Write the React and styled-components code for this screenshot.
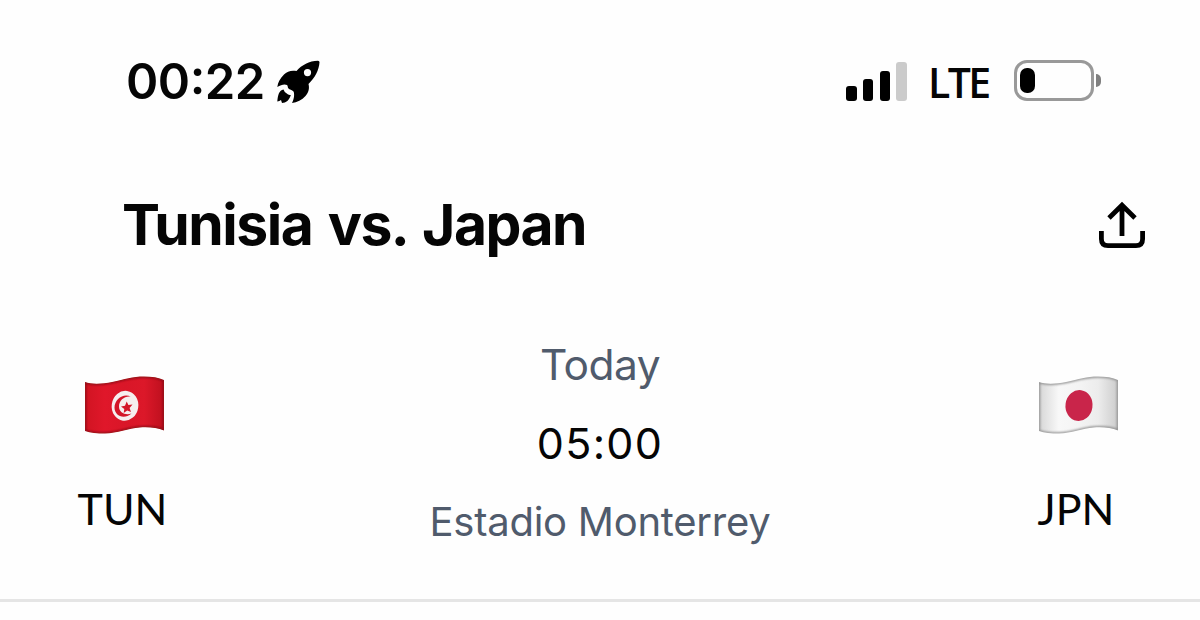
import React from "react";
import styled, { createGlobalStyle } from "styled-components";

const GlobalStyle = createGlobalStyle`
  body {
    margin: 0;
    background-color: #fefefe;
    font-family: "Inter", sans-serif;
    color: #050505;
  }
`;

const Page = styled.div`
  width: 1200px;
  height: 620px;
  box-sizing: border-box;
  padding-top: 52px;
  display: flex;
  flex-direction: column;
  overflow: hidden;
`;

const StatusBar = styled.div`
  height: 60px;
  padding: 0 99px 0 126px;
  display: flex;
  flex-direction: row;
  align-items: center;
  justify-content: space-between;
`;

const StatusGroup = styled.div`
  display: flex;
  flex-direction: row;
  align-items: center;
`;

const Clock = styled.div`
  width: 150px;
  font-weight: 600;
  font-size: 49px;
  line-height: 60px;
  white-space: nowrap;
  letter-spacing: -0.5px;
  font-feature-settings: "case";
`;

const Signal = styled.div`
  width: 61px;
  height: 39px;
  margin-bottom: 2px;
  display: flex;
  flex-direction: row;
  align-items: flex-end;
  justify-content: space-between;
`;

const SignalBar = styled.div`
  width: 10.5px;
  height: ${(props) => props.$height}px;
  border-radius: 3px;
  background-color: ${(props) => (props.$active ? "#000000" : "#cbcbcb")};
`;

const Network = styled.div`
  width: 107px;
  padding-left: 21px;
  box-sizing: border-box;
  font-family: "Open Sans", sans-serif;
  font-weight: 600;
  font-size: 41px;
  line-height: 60px;
  white-space: nowrap;
  letter-spacing: -2.6px;
`;

const Battery = styled.div`
  width: 80px;
  height: 41px;
  margin-bottom: 3px;
  box-sizing: border-box;
  border: 3px solid #999999;
  border-radius: 13px;
  padding: 5px 3px;
`;

const BatteryLevel = styled.div`
  width: 15px;
  height: 25px;
  border-radius: 7px;
  background-color: #000000;
`;

const BatteryTip = styled.div`
  width: 5px;
  height: 13px;
  margin-left: 2px;
  margin-bottom: 3px;
  border-radius: 0 5px 5px 0;
  background-color: #808080;
`;

const Header = styled.div`
  height: 60px;
  margin-top: 83px;
  padding: 0 54px 0 122px;
  display: flex;
  flex-direction: row;
  align-items: center;
  justify-content: space-between;
`;

const Title = styled.h1`
  margin: 0;
  font-weight: 700;
  font-size: 57px;
  line-height: 60px;
  white-space: nowrap;
  letter-spacing: -1.5px;
  word-spacing: 3.5px;
`;

const Match = styled.div`
  height: 276px;
  margin-top: 71px;
  box-sizing: border-box;
  border-bottom: 3px solid #e5e5e5;
  display: flex;
  flex-direction: row;
  justify-content: space-between;
`;

const Team = styled.div`
  width: ${(props) => props.$width}px;
  padding-top: 44px;
  display: flex;
  flex-direction: column;
  align-items: center;
`;

const TeamCode = styled.div`
  margin-top: 43px;
  margin-right: ${(props) => props.$shift || 0}px;
  font-family: "Lato", sans-serif;
  font-size: 43px;
  line-height: 52px;
`;

const Details = styled.div`
  flex: 1;
  padding-right: 8px;
  display: flex;
  flex-direction: column;
  align-items: center;
`;

const DetailText = styled.div`
  font-size: ${(props) => props.$size}px;
  line-height: 78px;
  letter-spacing: ${(props) => props.$spacing || 0}px;
  color: ${(props) => (props.$muted ? "#505b6c" : "#050505")};
  white-space: nowrap;
`;

const Venue = styled(DetailText)`
  line-height: 80px;
`;

const signalBars = [
  { height: 15, active: true },
  { height: 22, active: true },
  { height: 30, active: true },
  { height: 39, active: false },
];

const flagShape =
  "M5 12 C12 14.5 22 14 32 12 C45 9 52 6.5 64 6.5 C72 6.5 79 7.5 84 10 V60.5 C77 57.5 68 57 60 57.5 C48 58.5 38 63 25 63.5 C17 63.5 10 63 5 61 Z";

const starShape =
  "M41 36.5 L45 35.8 L46.7 31.5 L48.4 35 L52.5 34.5 L49.6 38 L51 42 L47.2 40.5 L43.7 43 L44.3 38.9 Z";

const RocketIcon = () => (
  <svg width="44" height="44" viewBox="0 0 44 44">
    <path
      fillRule="evenodd"
      d="M42 0.8 C33 1 26 5 20.5 11 C16 10 11 11 8 14.5 C4 18.5 2 22 1.3 27 C5 24.5 9 23.7 11 25 C12 26 11.5 27.5 12.5 28.5 C13.5 30 16 29.5 17.5 31.5 C18.5 33.5 18.5 38 16 43 C21 42.5 26 40 29.5 36 C33 32 33.5 28 32.5 24 C39 18 43 10 43.5 2.3 Q43.5 0.8 42 0.8 Z M31.5 9 A3.6 3.6 0 1 1 31.5 16.2 A3.6 3.6 0 1 1 31.5 9 Z"
    />
    <path d="M7.5 29.5 C3 30.5 2 34.5 1.3 41.5 Q3.5 41.3 5 40 L6 43 C10 43 13.5 40 14.8 35 Q12 35.4 10.8 33.6 Q8.4 32.4 7.5 29.5 Z" />
  </svg>
);

const ShareIcon = () => (
  <svg width="48" height="48" viewBox="0 0 48 48" fill="none" stroke="#000" strokeWidth="4.8">
    <path d="M24 35 V4.5 M11 17 L24 4.2 L37 17" />
    <path d="M3.4 30 V38 Q3.4 44.6 10 44.6 H38 Q44.6 44.6 44.6 38 V30" />
  </svg>
);

const Flag = ({ id, colors, edge, children }) => (
  <svg width="90" height="70" viewBox="0 0 90 70">
    <defs>
      <linearGradient id={id}>
        {colors.map((color, i) => (
          <stop key={i} offset={i / (colors.length - 1)} stopColor={color} />
        ))}
      </linearGradient>
      <clipPath id={`${id}-clip`}>
        <path d={flagShape} />
      </clipPath>
      <filter id={`${id}-soft`}>
        <feGaussianBlur stdDeviation="0.9" />
      </filter>
    </defs>
    <g clipPath={`url(#${id}-clip)`}>
      <path d={flagShape} fill={`url(#${id})`} />
      <path
        d={flagShape}
        fill="none"
        stroke={edge}
        strokeWidth="2.4"
        filter={`url(#${id}-soft)`}
      />
    </g>
    {children}
  </svg>
);

const App = () => {
  return (
    <>
      <GlobalStyle />
      <Page>
        <StatusBar>
          <StatusGroup>
            <Clock>00:22</Clock>
            <RocketIcon />
          </StatusGroup>
          <StatusGroup>
            <Signal>
              {signalBars.map((bar) => (
                <SignalBar key={bar.height} $height={bar.height} $active={bar.active} />
              ))}
            </Signal>
            <Network>LTE</Network>
            <Battery>
              <BatteryLevel />
            </Battery>
            <BatteryTip />
          </StatusGroup>
        </StatusBar>
        <Header>
          <Title>Tunisia vs. Japan</Title>
          <ShareIcon />
        </Header>
        <Match>
          <Team $width={250}>
            <Flag id="tun" colors={["#d01422", "#e0172a", "#d91628", "#dc1829", "#bd101e"]} edge="#8a1018">
              <ellipse cx="45" cy="35.8" rx="13.3" ry="15" fill="#f6eeee" transform="rotate(8 45 35.8)" />
              <path
                d="M51 26.8 C44 22.5 34.5 29 34.5 37.5 C34.5 46 44 50 51.5 43.5 C45.5 45.8 39 42.5 39 36.5 C39 30.3 45 25.6 51 26.8 Z"
                fill="#d31628"
              />
              <path d={starShape} fill="#d31628" />
            </Flag>
            <TeamCode $shift={5}>TUN</TeamCode>
          </Team>
          <Details>
            <DetailText $size={42.5} $spacing={-0.5} $muted>
              Today
            </DetailText>
            <DetailText $size={43} $spacing={1.3}>
              05:00
            </DetailText>
            <Venue $size={40} $spacing={-0.25} $muted>
              Estadio Monterrey
            </Venue>
          </Details>
          <Team $width={242}>
            <Flag id="jpn" colors={["#d6d6d6", "#f8f8f8", "#f4f4f4", "#ececec", "#cccccc"]} edge="#8f8f8f">
              <ellipse cx="45" cy="35.5" rx="13.5" ry="15.5" fill="#c9254a" transform="rotate(8 45 35.5)" />
            </Flag>
            <TeamCode $shift={6}>JPN</TeamCode>
          </Team>
        </Match>
      </Page>
    </>
  );
};

export default App;
